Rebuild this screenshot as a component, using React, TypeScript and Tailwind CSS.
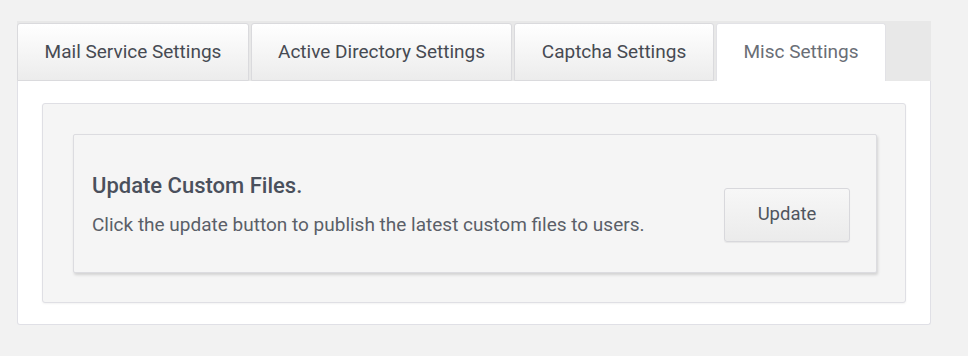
const tabs = [
  { label: "Mail Service Settings", width: "w-[232px]" },
  { label: "Active Directory Settings", width: "w-[261px]" },
  { label: "Captcha Settings", width: "w-[200px]" },
  { label: "Misc Settings", width: "w-[170px]", active: true },
];

export default function App() {
  return (
    <div className="min-h-screen bg-[#f2f2f2] pt-[21px] pl-[17px] font-['Roboto',sans-serif]">
      <div className="w-[914px]">
        {/* tab strip */}
        <div className="flex h-[60px] items-end gap-[2px] bg-[#e8e8e8] pt-[2px]">
          {tabs.map((tab) =>
            tab.active ? (
              <div
                key={tab.label}
                className={`${tab.width} flex h-[58px] items-center justify-center rounded-t-[3px] border border-b-0 border-[#e2e2e6] bg-white text-[19px] text-[#6a6e76]`}
              >
                {tab.label}
              </div>
            ) : (
              <div
                key={tab.label}
                className={`${tab.width} flex h-[58px] items-center justify-center rounded-t-[3px] border border-[#dadadd] bg-gradient-to-b from-white to-[#ececec] text-[19px] text-[#464a52]`}
              >
                {tab.label}
              </div>
            )
          )}
        </div>

        {/* body */}
        <div className="rounded-b-[3px] border border-t-0 border-[#e0e0e6] bg-white px-[24px] pt-[22px] pb-[21px]">
          <div className="rounded-[3px] border border-[#dfdfe4] bg-[#f5f5f5] pt-[30px] pb-[29px] pl-[30px] pr-[28px] shadow-[0_1px_2px_rgba(0,0,0,0.05)]">
            <div className="flex h-[139px] items-start rounded-[2px] border border-[#dcdce0] bg-[#f5f5f5] pl-[18px] pr-[26px] shadow-[1px_2px_3px_rgba(0,0,0,0.14)]">
              <div className="pt-[38px]">
                <h3 className="text-[22px] leading-[26px] font-medium text-[#4a505c]">
                  Update Custom Files.
                </h3>
                <p className="mt-[14px] text-[19px] leading-[24px] text-[#5a5f68]">
                  Click the update button to publish the latest custom files to users.
                </p>
              </div>
              <button className="ml-auto mt-[53px] h-[54px] w-[126px] rounded-[3px] border border-[#d8d8dc] bg-gradient-to-b from-[#f7f7f7] to-[#ebebeb] text-[18.5px] text-[#50555e] shadow-[0_1px_1px_rgba(0,0,0,0.06)]">
                Update
              </button>
            </div>
          </div>
        </div>
      </div>
    </div>
  );
}
